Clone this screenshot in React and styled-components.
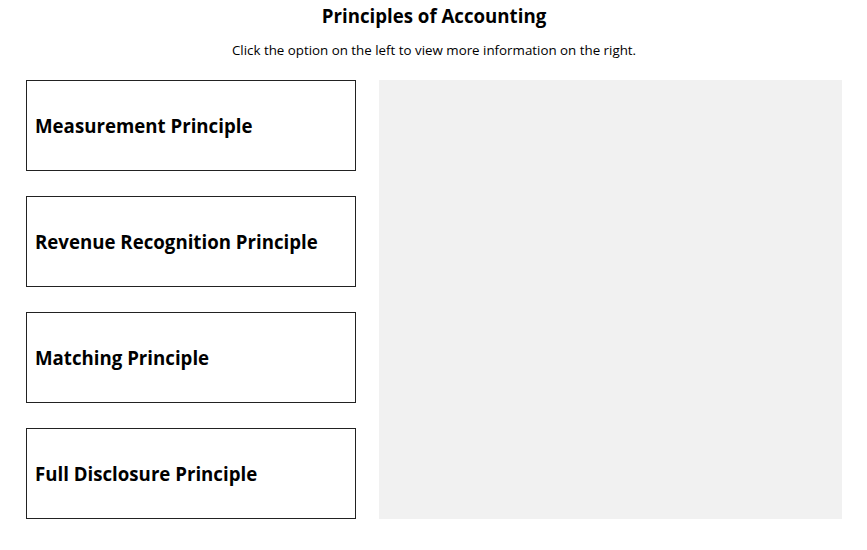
import React, { useState } from 'react'
import styled, { createGlobalStyle } from 'styled-components'

const GlobalStyle = createGlobalStyle`
  body {
    margin: 0;
    background: #fff;
    font-family: 'Open Sans', 'Liberation Sans', sans-serif;
    color: #000;
  }
`

const Page = styled.div`
  width: 867px;
  padding: 0 25px 0 26px;
  box-sizing: border-box;
`

const Title = styled.h1`
  margin: 0;
  padding-top: 3px;
  font-size: 14pt;
  line-height: 26px;
  font-weight: 700;
  text-align: center;
`

const Subtitle = styled.p`
  margin: 12px 0 0;
  font-size: 10pt;
  line-height: 18px;
  text-align: center;
`

const Layout = styled.div`
  display: flex;
  gap: 23px;
  margin-top: 21px;
`

const OptionList = styled.div`
  display: flex;
  flex-direction: column;
  gap: 25px;
  width: 330px;
  flex-shrink: 0;
`

const Option = styled.button`
  display: flex;
  align-items: center;
  height: 91px;
  padding: 0 8px;
  border: 1px solid #222;
  background: ${p => (p.$active ? '#f1f1f1' : '#fff')};
  font-family: inherit;
  font-size: 14pt;
  font-weight: 700;
  color: #000;
  text-align: left;
  cursor: pointer;
  box-sizing: border-box;
`

const InfoPanel = styled.div`
  flex: 1;
  background: #f1f1f1;
  padding: 20px;
  box-sizing: border-box;
  font-size: 14px;
  line-height: 1.5;
`

const options = [
  { title: 'Measurement Principle', text: '' },
  { title: 'Revenue Recognition Principle', text: '' },
  { title: 'Matching Principle', text: '' },
  { title: 'Full Disclosure Principle', text: '' }
]

function App () {
  const [selected, setSelected] = useState(null)

  return (
    <Page>
      <GlobalStyle />
      <Title>Principles of Accounting</Title>
      <Subtitle>Click the option on the left to view more information on the right.</Subtitle>
      <Layout>
        <OptionList>
          {options.map((o, i) => (
            <Option key={o.title} onClick={() => setSelected(i)}>
              {o.title}
            </Option>
          ))}
        </OptionList>
        <InfoPanel>{selected !== null && options[selected].text}</InfoPanel>
      </Layout>
    </Page>
  )
}

export default App
